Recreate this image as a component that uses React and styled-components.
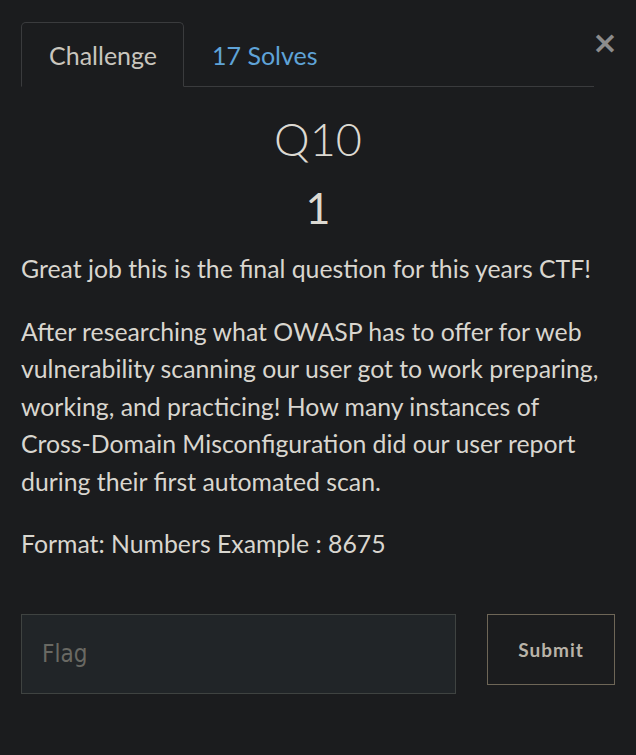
import React from 'react';
import styled, { createGlobalStyle } from 'styled-components';

const Global = createGlobalStyle`
  html, body {
    margin: 0;
    background: #1b1c1e;
  }
  body {
    font-family: Lato, "Noto Sans", sans-serif;
    color: #d9d6cf;
  }
`

const Modal = styled.div`
  position: relative;
  padding: 22px 21px 40px 21px;
`
const Close = styled.button`
  position: absolute;
  top: 27px;
  right: 18px;
  background: none;
  border: none;
  color: #8c8c8c;
  font-family: "DejaVu Sans", sans-serif;
  font-size: 31px;
  font-weight: 700;
  line-height: 1;
  padding: 0;
  cursor: pointer;
`
const Tabs = styled.div`
  display: flex;
  width: 573px;
  border-bottom: 1px solid #3a3b3d;
`
const Tab = styled.div`
  height: 63px;
  padding: 0 26px 0 27px;
  display: flex;
  align-items: center;
  font-size: 25px;
  margin-bottom: -1px;
  border: 1px solid ${p => (p.active ? '#3a3b3d' : 'transparent')};
  border-bottom-color: ${p => (p.active ? '#1b1c1e' : 'transparent')};
  border-radius: 5px 5px 0 0;
  color: ${p => (p.active ? '#c9c5bd' : '#5fa3d8')};
`
const Title = styled.h2`
  margin: 24px 0 0;
  text-align: center;
  font-size: 45px;
  font-weight: 300;
  line-height: 56px;
  color: #dcd9d2;
`
const Value = styled.h3`
  margin: 17px 0 0;
  text-align: center;
  font-size: 43px;
  font-weight: 400;
  line-height: 48px;
  color: #dcd9d2;
`
const Desc = styled.div`
  margin-top: 18px;
  width: 590px;
  font-size: 24.8px;
  line-height: 37.5px;
  color: #d9d6cf;
  p {
    margin: 0 0 25px;
  }
`
const Form = styled.form`
  display: flex;
  align-items: flex-start;
  margin-top: 51px;
  gap: 31px;
`
const Input = styled.input`
  width: 436px;
  height: 80px;
  box-sizing: border-box;
  background: #212528;
  border: 1px solid #3f4341;
  color: #d9d6cf;
  font-family: "DejaVu Sans Condensed", sans-serif;
  font-size: 24px;
  padding: 0 20px;
  outline: none;
  &::placeholder {
    color: #696963;
  }
`
const Submit = styled.button`
  width: 128px;
  height: 71px;
  background: transparent;
  border: 1px solid #6e6657;
  color: #b9b3a8;
  font-family: Lato, sans-serif;
  font-size: 19px;
  font-weight: 700;
  letter-spacing: 1px;
  cursor: pointer;
`

export default function App() {
  return (
    <>
      <Global />
      <Modal>
        <Close>×</Close>
        <Tabs>
          <Tab active>Challenge</Tab>
          <Tab>17 Solves</Tab>
        </Tabs>
        <Title>Q10</Title>
        <Value>1</Value>
        <Desc>
          <p>Great job this is the final question for this years CTF!</p>
          <p>
            After researching what OWASP has to offer for web vulnerability scanning our user got to
            work preparing, working, and practicing! How many instances of Cross-Domain
            Misconfiguration did our user report during their first automated scan.
          </p>
          <p>Format: Numbers Example : 8675</p>
        </Desc>
        <Form onSubmit={e => e.preventDefault()}>
          <Input placeholder="Flag" />
          <Submit type="submit">Submit</Submit>
        </Form>
      </Modal>
    </>
  );
}
